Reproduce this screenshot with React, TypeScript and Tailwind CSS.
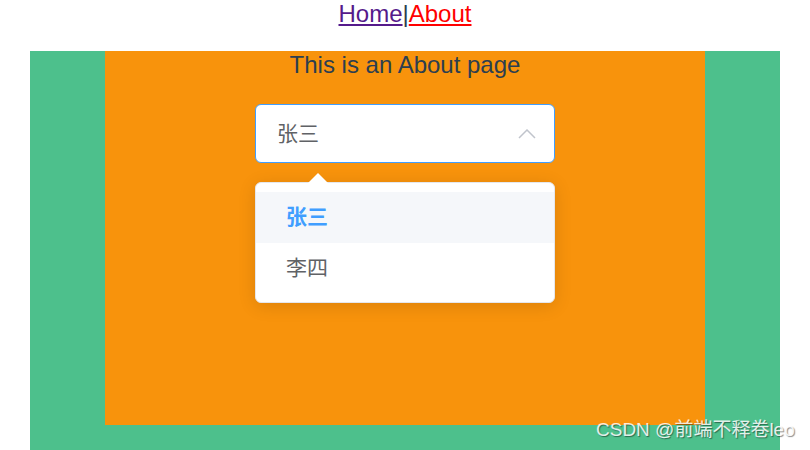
const font = { fontFamily: '"Liberation Sans", "Noto Sans CJK SC", sans-serif' }

function SelectBox() {
  return (
    <div className="relative mt-[26px] w-[300px]">
      <div className="flex h-[59px] items-center justify-between rounded-[6px] border border-[#409eff] bg-white pl-[21px] pr-[18px]">
        <span className="text-[21px] text-[#606266]">张三</span>
        <svg width="18" height="10" viewBox="0 0 18 10" fill="none">
          <polyline points="1,9 9,1 17,9" stroke="#c0c4cc" strokeWidth="1.5" />
        </svg>
      </div>

      {/* dropdown popper */}
      <div className="absolute left-0 top-[78px] w-[300px] rounded-[6px] border border-[#e4e7ed] bg-white py-[8.5px] text-left shadow-[0_3px_18px_0_rgba(0,0,0,0.12)]">
        <div className="absolute left-[52px] top-[-10px] h-0 w-0 border-x-[10px] border-b-[10px] border-x-transparent border-b-white" />
        <div className="flex h-[51px] items-center bg-[#f5f7fa] px-[30px] text-[21px] font-bold text-[#409eff]">
          张三
        </div>
        <div className="flex h-[51px] items-center px-[30px] text-[21px] text-[#606266]">
          李四
        </div>
      </div>
    </div>
  )
}

export default function App() {
  return (
    <div className="relative h-[450px] overflow-hidden bg-white text-center" style={font}>
      <nav className="h-[51px] text-[24px] leading-[27px] text-[#2c3e50]">
        <a href="#" className="text-[#551a8b] underline">Home</a>|<a href="#" className="text-[#ff0000] underline">About</a>
      </nav>

      <div className="mx-[30px] flex h-[420px] justify-center bg-[#4dc08c]">
        <div className="flex h-[374px] w-[600px] flex-col items-center bg-[#f8930c]">
          <h1 className="text-[24px] leading-[27px] font-normal text-[#2c3e50]">This is an About page</h1>
          <SelectBox />
        </div>
      </div>

      <div className="absolute bottom-[6px] left-[596px] whitespace-nowrap text-[19px] text-white/85 [text-shadow:1px_1px_1px_rgba(0,0,0,0.45)]">
        CSDN @前端不释卷leo
      </div>
    </div>
  )
}
